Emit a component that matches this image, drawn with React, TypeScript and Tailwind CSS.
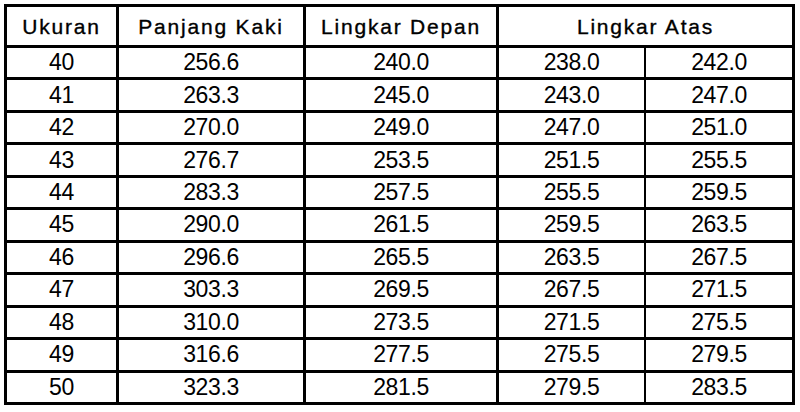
const ROWS: [string, string, string, string, string][] = [
  ["40", "256.6", "240.0", "238.0", "242.0"],
  ["41", "263.3", "245.0", "243.0", "247.0"],
  ["42", "270.0", "249.0", "247.0", "251.0"],
  ["43", "276.7", "253.5", "251.5", "255.5"],
  ["44", "283.3", "257.5", "255.5", "259.5"],
  ["45", "290.0", "261.5", "259.5", "263.5"],
  ["46", "296.6", "265.5", "263.5", "267.5"],
  ["47", "303.3", "269.5", "267.5", "271.5"],
  ["48", "310.0", "273.5", "271.5", "275.5"],
  ["49", "316.6", "277.5", "275.5", "279.5"],
  ["50", "323.3", "281.5", "279.5", "283.5"],
];

const head = "flex items-center justify-center leading-none text-[21px] tracking-[1.8px] [-webkit-text-stroke:0.35px_black]";
const cell = "flex items-center justify-center leading-none text-[23px] tracking-[-0.4px]";

export default function App() {
  return (
    <div className="w-[800px] h-[412px] bg-white pt-[4px] pl-[4px] text-black font-['Liberation_Sans',Arial,sans-serif]">
      <div className="w-[791px] h-[401px] border-[3px] border-black flex flex-col">
        {/* header */}
        <div className="h-[38px] shrink-0 grid grid-cols-[112px_187px_193px_293px]">
          <div className={`${head} border-r-[3px] border-black`}>Ukuran</div>
          <div className={`${head} border-r-[3px] border-black`}>Panjang Kaki</div>
          <div className={`${head} border-r-[3px] border-black`}>Lingkar Depan</div>
          <div className={head}>Lingkar Atas</div>
        </div>

        {ROWS.map((r) => (
          <div key={r[0]} className="flex-1 min-h-0 border-t-[3px] border-black grid grid-cols-[112px_187px_193px_147px_146px]">
            <div className={`${cell} border-r-[3px] border-black`}>{r[0]}</div>
            <div className={`${cell} border-r-[3px] border-black`}>{r[1]}</div>
            <div className={`${cell} border-r-[3px] border-black`}>{r[2]}</div>
            <div className={`${cell} border-r-2 border-black`}>{r[3]}</div>
            <div className={cell}>{r[4]}</div>
          </div>
        ))}
      </div>
    </div>
  );
}
